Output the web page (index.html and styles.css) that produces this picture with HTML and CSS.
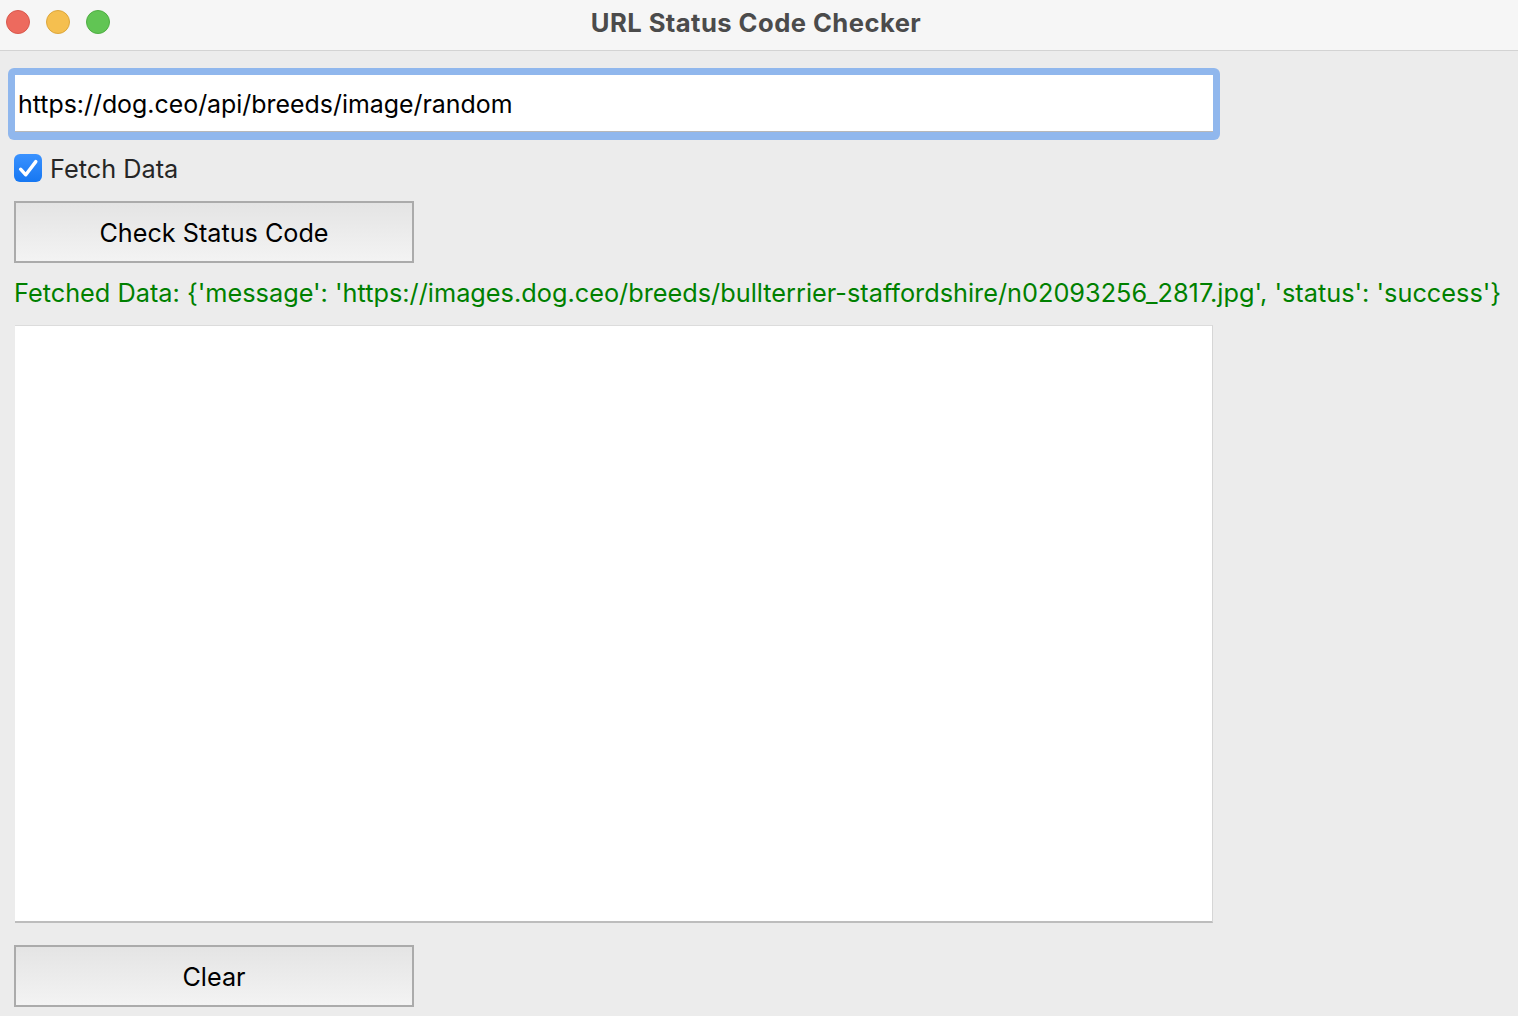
FILE: index.html
```html
<!DOCTYPE html>
<html lang="en">
<head>
<meta charset="utf-8">
<title>URL Status Code Checker</title>
<link rel="stylesheet" href="styles.css">
</head>
<body>
<div class="window">
  <header class="titlebar">
    <div class="lights">
      <span class="light red"></span>
      <span class="light yellow"></span>
      <span class="light green"></span>
    </div>
    <div class="title">URL Status Code Checker</div>
  </header>
  <main class="content">
    <div class="url-ring">
      <div class="url-field">https://dog.ceo/api/breeds/image/random</div>
    </div>
    <label class="check-row">
      <span class="checkbox">
        <svg width="28" height="28" viewBox="0 0 28 28"><path d="M6.6 15.2 L11.8 20.8 L21.8 7.6" fill="none" stroke="#fff" stroke-width="3.4" stroke-linecap="round" stroke-linejoin="round"/></svg>
      </span>
      <span class="check-label">Fetch Data</span>
    </label>
    <div class="btn btn-check">Check Status Code</div>
    <div class="result">Fetched Data: {'message': 'https://images.dog.ceo/breeds/bullterrier-staffordshire/n02093256_2817.jpg', 'status': 'success'}</div>
    <div class="output"></div>
    <div class="btn btn-clear">Clear</div>
  </main>
</div>
</body>
</html>
```
FILE: styles.css
```css
html, body {
  margin: 0;
  padding: 0;
}
body {
  width: 1518px;
  height: 1016px;
  overflow: hidden;
  background: #ececec;
  font-family: Inter, "Liberation Sans", Arial, sans-serif;
}
.window {
  display: flex;
  flex-direction: column;
  height: 1016px;
}
.titlebar {
  position: relative;
  height: 50px;
  background: #f6f6f6;
  border-bottom: 1px solid #d3d3d3;
  display: flex;
  align-items: center;
  justify-content: center;
}
.lights {
  position: absolute;
  left: 6px;
  top: 10px;
  display: flex;
  gap: 16px;
}
.light {
  width: 24px;
  height: 24px;
  border-radius: 50%;
  box-sizing: border-box;
}
.red { background: #ed6a5e; border: 1px solid #d9584d; }
.yellow { background: #f5bf4f; border: 1px solid #dda73c; }
.green { background: #61c554; border: 1px solid #4fae43; }
.title {
  font-weight: 700;
  font-size: 25.6px;
  letter-spacing: 0.45px;
  color: #4b4b4b;
  margin-top: -6px;
  padding-right: 6px;
}
.content {
  display: flex;
  flex-direction: column;
  align-items: flex-start;
  padding: 17px 0 0 14px;
}
.url-ring {
  margin-left: -6px;
  width: 1212px;
  height: 72px;
  box-sizing: border-box;
  padding: 7px 7px 8px 7px;
  background: #90b7ed;
  border-radius: 6px;
}
.url-field {
  height: 57px;
  box-sizing: border-box;
  background: #fff;
  border-bottom: 1px solid #b8b8b8;
  font-size: 24.9px;
  line-height: 56px;
  padding: 1px 0 0 3px;
  color: #000;
  white-space: nowrap;
}
.check-row {
  margin-top: 14px;
  height: 28px;
  display: flex;
  align-items: center;
  gap: 8px;
}
.checkbox {
  width: 28px;
  height: 28px;
  border-radius: 6px;
  background: linear-gradient(#3a92ff, #1677f2);
  display: block;
}
.checkbox svg { display: block; }
.check-label {
  font-size: 25.3px;
  color: #262626;
  line-height: 28px;
  padding-top: 2px;
}
.btn {
  width: 400px;
  height: 62px;
  box-sizing: border-box;
  border: 2px solid #ababab;
  background: linear-gradient(#e4e4e4, #f3f3f3);
  display: flex;
  align-items: center;
  justify-content: center;
  font-size: 25.2px;
  padding-top: 2px;
  color: #000;
}
.btn-check { margin-top: 19px; }
.result {
  margin-top: 15px;
  font-size: 25.3px;
  line-height: 30px;
  color: #008000;
  white-space: nowrap;
}
.output {
  margin-top: 17px;
  margin-left: 1px;
  width: 1198px;
  height: 598px;
  box-sizing: border-box;
  background: #fff;
  border-top: 1px solid #dcdcdc;
  border-right: 1px solid #d6d6d6;
  border-bottom: 2px solid #bdbdbd;
}
.btn-clear { margin-top: 22px; }
```
